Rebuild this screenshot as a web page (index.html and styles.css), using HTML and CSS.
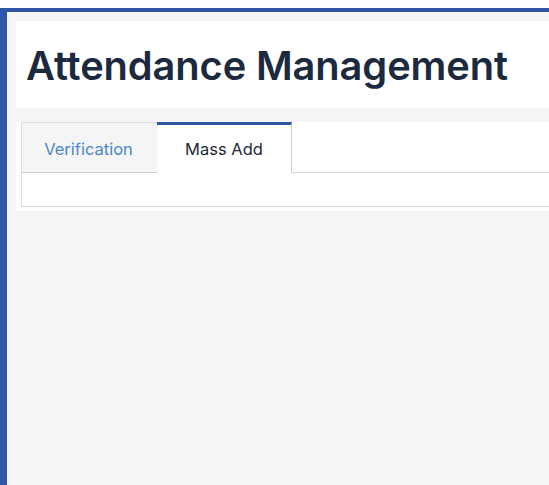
FILE: index.html
```html
<!DOCTYPE html>
<html>
<head>
<meta charset="utf-8">
<link rel="stylesheet" href="styles.css">
</head>
<body>
<div class="topgap"></div>
<div class="frame">
  <div class="content">
    <div class="header">
      <h1 class="title">Attendance Management</h1>
    </div>
    <div class="panel">
      <div class="tabs">
        <div class="tab tab-inactive">Verification</div>
        <div class="tab tab-active">Mass Add</div>
        <div class="tab-fill"></div>
      </div>
      <div class="tab-body"></div>
    </div>
  </div>
</div>
</body>
</html>
```
FILE: styles.css
```css
html, body {
  margin: 0;
  padding: 0;
}
body {
  background: #ffffff;
  font-family: "Inter", "Noto Sans", sans-serif;
  overflow: hidden;
}
.topgap {
  height: 8px;
  background: #ffffff;
}
.frame {
  border-top: 4px solid #2f56a6;
  border-left: 7px solid #2f56a6;
  background: #f5f5f5;
  height: calc(100vh - 8px);
  box-sizing: border-box;
}
.content {
  padding: 9px 0 0 9px;
}
.header {
  background: #ffffff;
  height: 87px;
  display: flex;
  align-items: center;
  padding-left: 10px;
  box-sizing: border-box;
}
.title {
  margin: 0;
  font-family: "Inter", sans-serif;
  font-weight: 600;
  font-size: 39.8px;
  color: #1b2a3e;
  letter-spacing: -0.1px;
  padding-top: 2px;
}
.panel {
  margin-top: 14px;
  background: #ffffff;
  padding: 0 0 4px 5px;
}
.tabs {
  display: flex;
  height: 51px;
}
.tab {
  box-sizing: border-box;
  display: flex;
  align-items: center;
  justify-content: center;
  font-size: 16.5px;
}
.tab-inactive {
  width: 136px;
  background: #f5f5f5;
  color: #4a87c9;
  border: 1px solid #dcdcdc;
  border-bottom: 1px solid #cfcfcf;
  border-right: none;
  padding: 2px 2px 0 0;
}
.tab-active {
  width: 135px;
  background: #ffffff;
  color: #222a35;
  border-top: 3px solid #2f56a6;
  border-right: 1px solid #cfcfcf;
}
.tab-fill {
  flex: 1;
  border-bottom: 1px solid #d6d6d6;
}
.tab-body {
  height: 33px;
  border-left: 1px solid #dcdcdc;
  border-bottom: 1px solid #d6d6d6;
}
```
